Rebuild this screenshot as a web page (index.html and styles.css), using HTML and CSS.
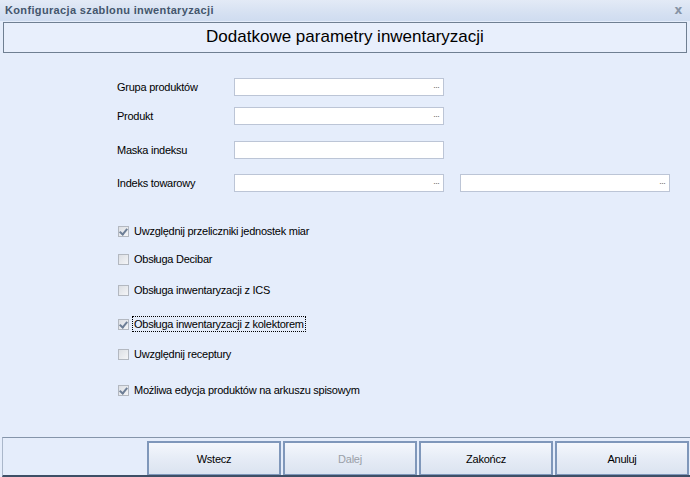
FILE: index.html
```html
<!DOCTYPE html>
<html lang="pl">
<head>
<meta charset="utf-8">
<title>Konfiguracja szablonu inwentaryzacji</title>
<link rel="stylesheet" href="styles.css">
</head>
<body>
<div class="window">
  <div class="titlebar">
    <span class="title">Konfiguracja szablonu inwentaryzacji</span>
    <span class="close">x</span>
  </div>
  <div class="header">Dodatkowe parametry inwentaryzacji</div>
  <div class="content">
    <div class="fields">
      <div class="row r1">
        <span class="label">Grupa produktów</span>
        <div class="input"><span class="dots">···</span></div>
      </div>
      <div class="row r2">
        <span class="label">Produkt</span>
        <div class="input"><span class="dots">···</span></div>
      </div>
      <div class="row r3">
        <span class="label">Maska indeksu</span>
        <div class="input"></div>
      </div>
      <div class="row r4">
        <span class="label">Indeks towarowy</span>
        <div class="input"><span class="dots">···</span></div>
        <div class="input second"><span class="dots">···</span></div>
      </div>
    </div>
    <div class="checks">
      <div class="check c1"><span class="box checked"></span><span class="ctext">Uwzględnij przeliczniki jednostek miar</span></div>
      <div class="check c2"><span class="box"></span><span class="ctext">Obsługa Decibar</span></div>
      <div class="check c3"><span class="box"></span><span class="ctext">Obsługa inwentaryzacji z ICS</span></div>
      <div class="check c4"><span class="box checked"></span><span class="ctext focus">Obsługa inwentaryzacji z kolektorem</span></div>
      <div class="check c5"><span class="box"></span><span class="ctext">Uwzględnij receptury</span></div>
      <div class="check c6"><span class="box checked"></span><span class="ctext">Możliwa edycja produktów na arkuszu spisowym</span></div>
    </div>
  </div>
  <div class="footer">
    <div class="btn">Wstecz</div>
    <div class="btn disabled">Dalej</div>
    <div class="btn">Zakończ</div>
    <div class="btn">Anuluj</div>
  </div>
</div>
</body>
</html>
```

FILE: styles.css
```css
* { box-sizing: border-box; }
html, body {
  margin: 0;
  padding: 0;
  width: 690px;
  height: 477px;
  overflow: hidden;
  background: #e5edfb;
}
.window {
  width: 690px;
  height: 477px;
  display: flex;
  flex-direction: column;
  font-family: "Liberation Sans", Arial, sans-serif;
  font-size: 11px;
  letter-spacing: -0.25px;
  color: #000;
  background: #e5edfb;
}
.titlebar {
  height: 21px;
  flex: none;
  display: flex;
  align-items: center;
  justify-content: space-between;
  padding: 0 8px 1px 5px;
  background: linear-gradient(to bottom, #e3eaf6 0%, #d6e1f2 60%, #cfdcf0 100%);
}
.title {
  font-weight: bold;
  font-size: 11px;
  color: #44566c;
  letter-spacing: 0.35px;
}
.close {
  font-family: "DejaVu Sans", sans-serif;
  font-weight: bold;
  font-size: 12px;
  color: #8794a6;
  line-height: 1;
}
.header {
  flex: none;
  margin: 1px 3px 0 3px;
  height: 31px;
  border: 1px solid #6f7f92;
  background: #e8effc;
  display: flex;
  align-items: center;
  justify-content: center;
  font-size: 17px;
  letter-spacing: 0;
  padding-bottom: 2px;
}
.content {
  flex: 1;
  padding: 25px 0 0 117px;
}
.fields {
  display: flex;
  flex-direction: column;
}
.row {
  display: flex;
  align-items: center;
  height: 18px;
}
.r2 { margin-top: 11px; }
.r3 { margin-top: 16px; }
.r4 { margin-top: 15px; }
.label {
  width: 117px;
  flex: none;
  padding-bottom: 1px;
}
.input {
  width: 210px;
  height: 18px;
  background: #fff;
  border: 1px solid #bcc5d6;
  display: flex;
  align-items: center;
  justify-content: flex-end;
  padding-right: 4px;
}
.input.second { margin-left: 16px; }
.dots {
  color: #6b6b6b;
  font-size: 9px;
  letter-spacing: -1px;
}
.checks {
  display: flex;
  flex-direction: column;
  margin-top: 31px;
  padding-left: 1px;
}
.check {
  display: flex;
  align-items: center;
  height: 16px;
}
.c2 { margin-top: 12px; }
.c3 { margin-top: 15px; }
.c4 { margin-top: 18px; }
.c5 { margin-top: 14px; }
.c6 { margin-top: 20px; }
.box {
  width: 11px;
  height: 11px;
  flex: none;
  border: 1px solid #b3b8c0;
  background: linear-gradient(135deg, #dcdfe4 0%, #f4f5f7 100%);
  margin-right: 4px;
  position: relative;
}
.box.checked::after {
  content: "";
  position: absolute;
  left: 2px;
  top: 0px;
  width: 3px;
  height: 6px;
  border-right: 2px solid #6d7e96;
  border-bottom: 2px solid #6d7e96;
  transform: rotate(40deg);
}
.ctext { padding: 0 1px; line-height: 14px; }
.ctext.focus { outline: 1px dotted #000; outline-offset: 0; }
.footer {
  flex: none;
  height: 40px;
  border-top: 1px solid #8595aa;
  border-left: 1px solid #aab7ca;
  border-bottom: 2px solid #3e4f66;
  margin-left: 2px;
  display: flex;
  justify-content: flex-end;
  align-items: stretch;
  gap: 2px;
  padding: 3px 1px 0 0;
  background: #e5edfb;
}
.btn {
  width: 134px;
  border: 2px solid #7f97ba;
  border-bottom-width: 1px;
  background: linear-gradient(to bottom, #f4f7fc 0%, #e6ecf6 50%, #dbe3f0 100%);
  display: flex;
  align-items: center;
  justify-content: center;
  font-size: 11px;
}
.btn.disabled { color: #9aa0a8; }
```
